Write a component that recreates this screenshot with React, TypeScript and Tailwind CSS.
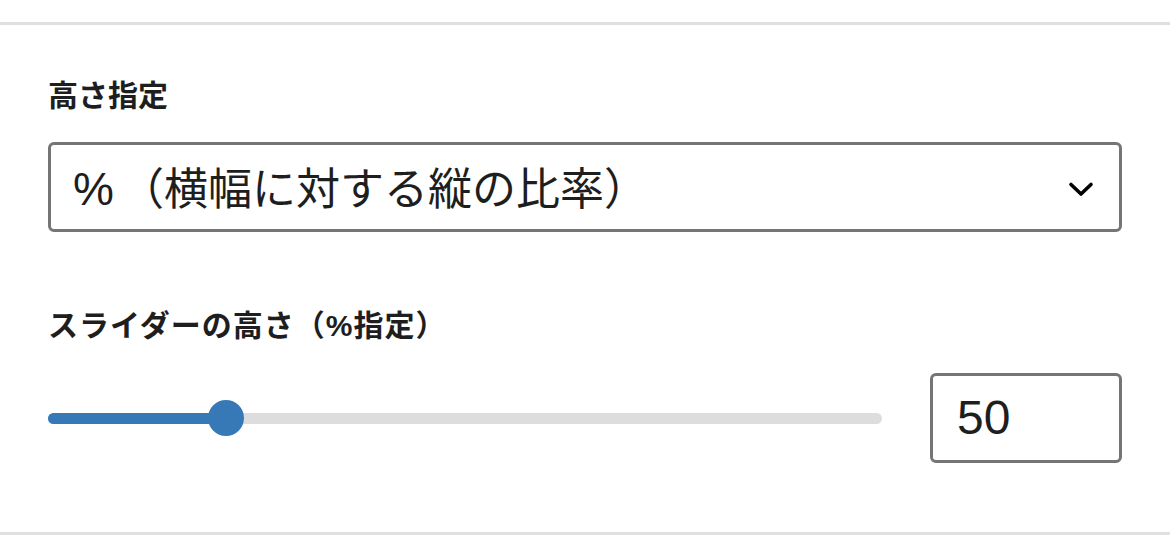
import { useState } from 'react';

const FONT = '"Liberation Sans", "Noto Sans CJK JP", sans-serif';

// Chevron used for the select box
const Chevron = () => (
    <svg width="26" height="16" viewBox="0 0 26 16" fill="none">
        <path d="M3 3.5l10 9.5 10-9.5" stroke="#000" strokeWidth="3.6" strokeLinecap="round" strokeLinejoin="round" />
    </svg>
);

const HeightPanel: React.FC = () => {
    const [value] = useState(50);
    const min = 10;
    const max = 210;
    const ratio = (value - min) / (max - min); // thumb position

    return (
        <div className="w-full bg-white text-[#1e1e1e]" style={{ fontFamily: FONT }}>
            <div className="h-[22px]" />
            <div className="h-[3px] bg-[#e0e0e0]" />

            <div className="px-12">
                {/* Height mode */}
                <div className="mt-[53px] text-[30px] leading-[36px] font-bold">高さ指定</div>
                <button
                    type="button"
                    className="mt-[28px] flex h-[90px] w-full items-center justify-between rounded-[6px] border-[3px] border-[#757575] bg-white pl-[22px] pr-[25px] text-left text-[44px] leading-none text-[#1e1e1e]"
                >
                    <span className="pt-[4px]">
                        <span className="inline-block w-[41px] text-[46px]">%</span>
                        <span className="ml-[6px]">（横幅に対する縦の比率）</span>
                    </span>
                    <span className="pt-[4px]">
                        <Chevron />
                    </span>
                </button>

                {/* Slider height */}
                <div className="mt-[76px] text-[30px] leading-[36px] font-bold tracking-[1px]">スライダーの高さ（%指定）</div>
                <div className="mt-[29px] flex items-center gap-12">
                    <div className="relative flex h-9 flex-1 items-center">
                        <div className="h-[11px] w-full rounded-full bg-[#dddddd]" />
                        <div
                            className="absolute left-0 h-[11px] rounded-full bg-[#3679b6]"
                            style={{ width: `calc(${ratio} * (100% - 36px) + 18px)` }}
                        />
                        <div
                            className="absolute h-9 w-9 rounded-full bg-[#3679b6]"
                            style={{ left: `calc(${ratio} * (100% - 36px))` }}
                        />
                    </div>
                    <div className="flex h-[90px] w-[192px] items-center rounded-[6px] border-[3px] border-[#757575] pl-[24px] text-[48px]">
                        {value}
                    </div>
                </div>
            </div>

            <div className="mt-[69px] h-[3px] bg-[#e0e0e0]" />
        </div>
    );
};

export default function App() {
    return <HeightPanel />;
}
